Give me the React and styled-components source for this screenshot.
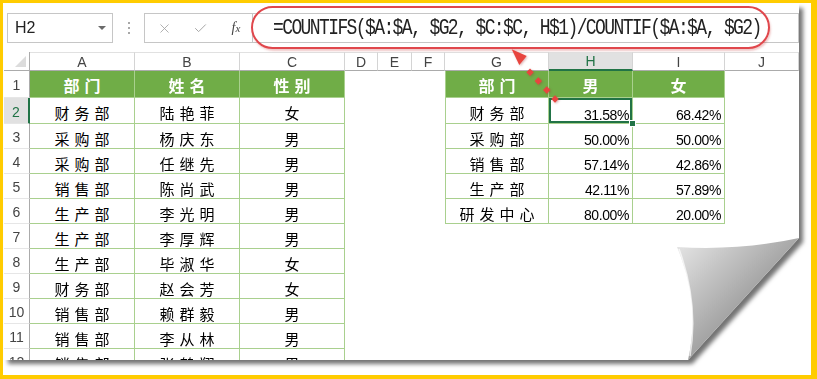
import React from "react"
import styled, { createGlobalStyle } from "styled-components"
import { X, Check } from "lucide-react"

const GlobalStyle = createGlobalStyle`
  html, body { margin: 0; padding: 0; background: #fff; }
  body { font-family: "Liberation Sans", Arial, sans-serif; }
`

const GREEN = "#70AD47"
const LINE = "#A9D08E"
const EXCEL = "#217346"
const CJK = `"Noto Sans CJK SC", "Noto Sans", sans-serif`

////OUTER YELLOW FRAME
const Frame = styled.div`
  width: 817px;
  height: 379px;
  box-sizing: border-box;
  border-style: solid;
  border-color: #ffcc00;
  border-width: 3px 6px 4px 3px;
  padding: 1px 0 0 1px;
  background: #fff;
  overflow: hidden;
`

//the shadow follows the peeled corner, so it sits on a parent of the clipped sheet
const ShadowWrap = styled.div`
  position: relative;
  width: 795px;
  height: 356px;
  filter: drop-shadow(4px 4px 2px rgba(0, 0, 0, 0.55));
`

const Sheet = styled.div`
  width: 100%;
  height: 100%;
  background: #fff;
  overflow: hidden;
  clip-path: polygon(0 0, 795px 0, 795px 234px, 684px 356px, 0 356px);
`

////FORMULA BAR
const FormulaBar = styled.div`
  display: flex;
  height: 30px;
  margin-top: 9px;
  padding-left: 3px;
`

const NameBox = styled.div`
  width: 106px;
  box-sizing: border-box;
  border: 1px solid #c6c6c6;
  display: flex;
  align-items: center;
  justify-content: space-between;
  padding: 0 6px 0 7px;
  font-size: 16px;
  color: #222;
`

const Caret = styled.span`
  width: 0;
  height: 0;
  border-left: 4px solid transparent;
  border-right: 4px solid transparent;
  border-top: 4px solid #6a6a6a;
`

const Grip = styled.div`
  width: 31px;
  display: flex;
  flex-direction: column;
  align-items: center;
  justify-content: center;
  gap: 3px;
  & span {
    width: 2px;
    height: 2px;
    background: #a8a8a8;
  }
`

const FxBox = styled.div`
  width: 109px;
  box-sizing: border-box;
  border: 1px solid #c6c6c6;
  display: grid;
  grid-template-columns: repeat(3, 36px);
  padding-left: 1px;
  align-items: center;
  justify-items: center;
  color: #a6a6a6;
`

const Fx = styled.span`
  font-family: "Liberation Serif", serif;
  font-style: italic;
  font-size: 14px;
  color: #444;
  & small { font-size: 11px; }
`

const FormulaInput = styled.div`
  flex: 1;
  box-sizing: border-box;
  border: 1px solid #c6c6c6;
  border-left: none;
  display: flex;
  align-items: center;
  padding-left: 20px;
`

const FormulaText = styled.span`
  display: inline-block;
  font-family: "Liberation Mono", "Courier New", monospace;
  font-size: 18px;
  letter-spacing: -1.6px;
  color: #222;
  white-space: pre;
  transform: scaleY(1.25);
`

////WORKSHEET GRID
const Grid = styled.div`
  display: grid;
  grid-template-columns: 26px 105px 105px 105px 33px 34px 33px 104px 84px 92px 74px;
  grid-template-rows: 19px 27px 26px repeat(10, 25px);
  margin-top: 9px;
`

const Corner = styled.div`
  position: relative;
  box-sizing: border-box;
  border-right: 1px solid #ababab;
  border-bottom: 1px solid #ababab;
  &::after {
    content: "";
    position: absolute;
    right: 3px;
    bottom: 3px;
    width: 11px;
    height: 11px;
    background: #dcdcdc;
    clip-path: polygon(100% 0, 100% 100%, 0 100%);
  }
`

const ColHead = styled.div`
  box-sizing: border-box;
  display: flex;
  align-items: center;
  justify-content: center;
  font-size: 14px;
  color: ${(p) => (p.$active ? EXCEL : "#444")};
  background: ${(p) => (p.$active ? "#e1e1e1" : "#fff")};
  border-top: 1px solid #e1e1e1;
  border-right: 1px solid #d4d4d4;
  border-bottom: ${(p) => (p.$active ? `2px solid ${EXCEL}` : "1px solid #ababab")};
`

const RowHead = styled.div`
  box-sizing: border-box;
  display: flex;
  align-items: center;
  justify-content: center;
  padding-top: 2px;
  font-size: 14px;
  color: ${(p) => (p.$active ? EXCEL : "#444")};
  background: ${(p) => (p.$active ? "#e1e1e1" : "#fff")};
  border-bottom: 1px solid #e6e6e6;
  border-right: ${(p) => (p.$active ? `2px solid ${EXCEL}` : "1px solid #ababab")};
`

const Cell = styled.div`
  position: relative;
  box-sizing: border-box;
  display: flex;
  border-right: 1px solid ${LINE};
  border-bottom: 1px solid ${LINE};
  border-left: ${(p) => (p.$lead ? `1px solid ${LINE}` : "none")};
  background: ${(p) => (p.$head ? GREEN : "#fff")};
  color: ${(p) => (p.$head ? "#fff" : "#000")};
  box-shadow: ${(p) => (p.$selected ? `inset 0 0 0 2px ${EXCEL}` : "none")};
  ${(p) =>
    p.$num
      ? `
    justify-content: flex-end;
    align-items: flex-end;
    padding-right: 3px;
    font-size: 14px;
    line-height: 16px;
    letter-spacing: -0.4px;
    font-family: "Liberation Sans", Arial, sans-serif;
  `
      : `
    justify-content: center;
    align-items: center;
    padding-top: ${p.$head ? "1px" : "4px"};
    padding-left: 5px;
    font-family: ${CJK};
    font-size: ${p.$head ? "16px" : "15px"};
    font-weight: ${p.$head ? 700 : 400};
    line-height: 1;
    letter-spacing: 5px;
  `}
  &::after {
    content: "";
    display: ${(p) => (p.$selected ? "block" : "none")};
    position: absolute;
    right: -4px;
    bottom: -4px;
    width: 5px;
    height: 5px;
    background: ${EXCEL};
    border: 1px solid #fff;
    z-index: 2;
  }
`

const Blank = styled.div``

////ANNOTATIONS LAID OVER THE SHEET
const Highlight = styled.div`
  position: absolute;
  left: 247px;
  top: 2px;
  width: 519px;
  height: 43px;
  box-sizing: border-box;
  border: 2px solid #e0474c;
  border-radius: 22px;
  box-shadow: 1px 2px 2px rgba(200, 40, 40, 0.25);
  pointer-events: none;
`

const Overlay = styled.svg`
  position: absolute;
  left: ${(p) => p.$x}px;
  top: ${(p) => p.$y}px;
  overflow: visible;
  pointer-events: none;
`

const leftTable = [
  ["部门", "姓名", "性别"],
  ["财务部", "陆艳菲", "女"],
  ["采购部", "杨庆东", "男"],
  ["采购部", "任继先", "男"],
  ["销售部", "陈尚武", "男"],
  ["生产部", "李光明", "男"],
  ["生产部", "李厚辉", "男"],
  ["生产部", "毕淑华", "女"],
  ["财务部", "赵会芳", "女"],
  ["销售部", "赖群毅", "男"],
  ["销售部", "李从林", "男"],
  ["销售部", "张鹤翔", "男"],
]

const rightTable = [
  ["部门", "男", "女"],
  ["财务部", "31.58%", "68.42%"],
  ["采购部", "50.00%", "50.00%"],
  ["销售部", "57.14%", "42.86%"],
  ["生产部", "42.11%", "57.89%"],
  ["研发中心", "80.00%", "20.00%"],
]

const COLS = ["A", "B", "C", "D", "E", "F", "G", "H", "I", "J"]

const Arrow = () => {
  const dots = [
    [26, 28.3],
    [34.3, 37],
    [42.7, 46],
    [51, 55],
  ]
  return (
    <Overlay $x={500} $y={40} width="60" height="62" viewBox="0 0 60 62"
      style={{ filter: "drop-shadow(1px 1px 1px rgba(160,40,40,0.35))" }}>
      <polygon points="7.7,5.3 22.7,12 15.3,21" fill="#e8453f" />
      {dots.map(([x, y], i) => (
        <rect key={i} x={x - 2.6} y={y - 2.6} width="5.2" height="5.2" fill="#e8453f"
          transform={`rotate(45 ${x} ${y})`} />
      ))}
    </Overlay>
  )
}

const Curl = () => (
  <Overlay $x={660} $y={225} width="140" height="135" viewBox="660 225 140 135">
    <defs>
      <linearGradient id="curlFill" x1="0" y1="0" x2="1" y2="1">
        <stop offset="0" stopColor="#e8e8e8" />
        <stop offset="0.55" stopColor="#a2a2a2" />
        <stop offset="1" stopColor="#7c7c7c" />
      </linearGradient>
    </defs>
    <path d="M673,243 Q735,247 795,234 L684,356 Q697,300 673,243 Z" fill="url(#curlFill)" />
    <path d="M675,245 Q695,300 686,352" fill="none" stroke="rgba(255,255,255,0.7)" strokeWidth="1.5" />
  </Overlay>
)

export default function App() {
  return (
    <>
      <GlobalStyle />
      <Frame>
        <ShadowWrap>
          <Sheet>
            <FormulaBar>
              <NameBox>
                H2
                <Caret />
              </NameBox>
              <Grip>
                <span />
                <span />
                <span />
              </Grip>
              <FxBox>
                <X size={15} strokeWidth={1.4} />
                <Check size={15} strokeWidth={1.6} />
                <Fx>
                  f<small>x</small>
                </Fx>
              </FxBox>
              <FormulaInput>
                <FormulaText>=COUNTIFS($A:$A, $G2, $C:$C, H$1)/COUNTIF($A:$A, $G2)</FormulaText>
              </FormulaInput>
            </FormulaBar>

            <Grid>
              <Corner />
              {COLS.map((c) => (
                <ColHead key={c} $active={c === "H"}>
                  {c}
                </ColHead>
              ))}
              {leftTable.map((row, r) => {
                const head = r === 0
                const right = rightTable[r]
                return (
                  <React.Fragment key={r}>
                    <RowHead $active={r === 1}>{r + 1}</RowHead>
                    {row.map((txt, i) => (
                      <Cell key={"l" + i} $head={head}>
                        {txt}
                      </Cell>
                    ))}
                    <Blank />
                    <Blank />
                    <Blank />
                    {right ? (
                      right.map((txt, i) => (
                        <Cell key={"r" + i} $head={head} $lead={i === 0}
                          $num={!head && i > 0} $selected={r === 1 && i === 1}>
                          {txt}
                        </Cell>
                      ))
                    ) : (
                      <>
                        <Blank />
                        <Blank />
                        <Blank />
                      </>
                    )}
                    <Blank />
                  </React.Fragment>
                )
              })}
            </Grid>
          </Sheet>
          <Highlight />
          <Arrow />
          <Curl />
        </ShadowWrap>
      </Frame>
    </>
  )
}
